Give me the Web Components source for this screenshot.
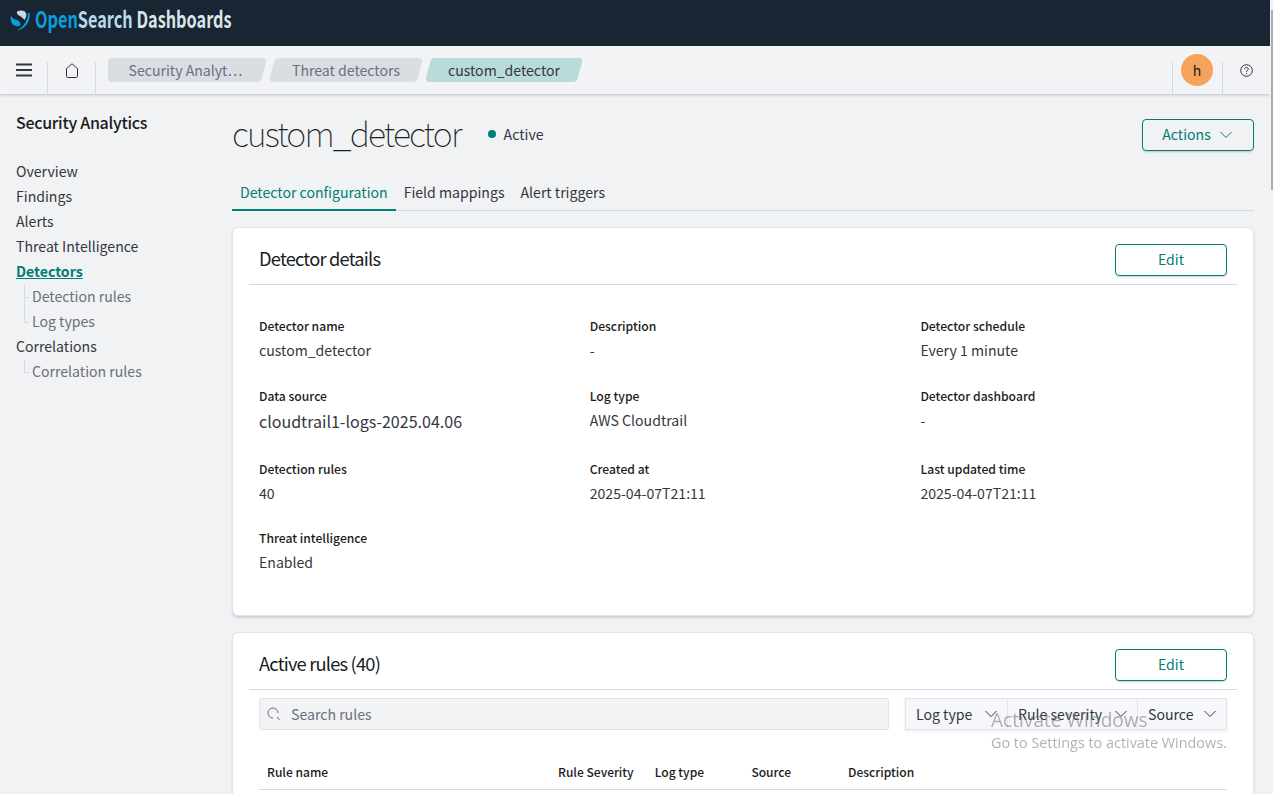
<!DOCTYPE html>
<html>
<head>
<meta charset="utf-8">
<title>Detector details</title>
<style>
    html, body { margin: 0; height: 794px; overflow: hidden; background: #f0f2f4; }
    body {
        font-family: "Noto Sans CJK SC", "Source Sans Pro", "Noto Sans", sans-serif;
        font-size: 14.1px;
        line-height: 21px;
        color: #1a1c21;
    }
    .shell { display: flex; flex-direction: column; height: 794px; }
    .body { display: flex; flex: 1; min-height: 0; }
    .main { flex: 1; min-width: 0; overflow: hidden; padding: 16px 19px 0 16px; }
</style>
</head>
<body>
<div class="shell">
    <os-header></os-header>
    <os-breadcrumbs></os-breadcrumbs>
    <div class="body">
        <os-sidenav></os-sidenav>
        <div class="main">
            <os-pagehead></os-pagehead>
            <os-panel heading="Detector details">
                <os-details></os-details>
            </os-panel>
            <os-panel heading="Active rules (40)" class="rules">
                <os-rules></os-rules>
            </os-panel>
        </div>
    </div>
</div>
<os-scrollbar></os-scrollbar>
<os-watermark></os-watermark>

<script>
const chevron = `<svg width="12" height="8" viewBox="0 0 12 8"><path d="M.5 1l5.500 5.500L11.500 1" fill="none" stroke="currentColor" stroke-width="1"/></svg>`;

class OsHeader extends HTMLElement {
    constructor () {
        super();
        this.attachShadow({mode: 'open'}).innerHTML = `
<style>
    :host { display: flex; align-items: center; height: 46px; background: #182533; padding-left: 10px; flex: none; }
    svg { flex: none; margin-top: -5px; }
    .name { font-size: 23px; line-height: 30px; font-weight: 700; margin-left: 4px; margin-top: -11px; transform: scaleX(.707); transform-origin: left center; white-space: nowrap; color: #dbe4e9; }
    .open { color: #0a9fdc; }
    .search { color: #b9d9ea; }
</style>
<svg width="21" height="22" viewBox="0 0 21 22">
    <path d="M19.500 3c1.500 8-4.500 16.500-13.500 18 5.500-2.500 11.500-8 12-18z" fill="#0a9fdc"/>
    <path d="M7 1.500c3-1.500 7-1.200 8.500.8 1.800 2.400.5 5.200-1 7.700-1.500-2.500-4-3.500-5.500-4.500C7.200 4.500 6.500 3 7 1.500z" fill="#c4dbe6"/>
    <path d="M1 5.500c1.500 3 3.700 3.900 6 4.600 2.500.8 3.500 2.500 3.500 5.200-2.800 1.500-6 1-8-1.200C.7 12 .3 8.500 1 5.500z" fill="#0a9fdc"/>
</svg>
<span class="name"><span class="open">Open</span><span class="search">Search</span> Dashboards</span>`;
    }
}
customElements.define('os-header', OsHeader);

class OsCrumb extends HTMLElement {
    constructor () {
        super();
        this.attachShadow({mode: 'open'}).innerHTML = `
<style>
    :host { display: block; position: relative; height: 24px; flex: none; }
    :host::before {
        content: ''; position: absolute; inset: 0; background: #dadde2;
        border-radius: 4px; transform: skewX(-15deg);
    }
    :host([first])::after {
        content: ''; position: absolute; left: -3px; top: 0; width: 12px; height: 24px;
        background: #dadde2; border-radius: 4px 0 0 4px;
    }
    :host([last])::before { background: #b9dcdb; }
    span { position: relative; z-index: 1; display: block; line-height: 24px; color: #69707d; text-align: center; white-space: nowrap; }
    :host([first]) span { padding-right: 4px; }
    :host([last]) span { color: #343741; }
</style>
<span><slot></slot></span>`;
    }
}
customElements.define('os-crumb', OsCrumb);

class OsBreadcrumbs extends HTMLElement {
    constructor () {
        super();
        this.attachShadow({mode: 'open'}).innerHTML = `
<style>
    :host { display: flex; height: 48px; width: 1270px; background: #f2f3f5; box-shadow: 0 1px 3px rgba(60,70,90,.28); position: relative; z-index: 2; flex: none; }
    .cell { display: flex; align-items: center; justify-content: center; color: #343741; }
    .menu { width: 47px; justify-content: flex-start; padding-left: 16px; box-sizing: border-box; }
    .sep { width: 1px; background: #d3dae6; margin-top: 16px; height: 32px; flex: none; }
    .home { width: 47px; }
    .crumbs { display: flex; flex: 1; align-items: center; gap: 8px; padding-left: 15px; height: 46px; margin-top: 1px; }
    .avatar { width: 32px; height: 32px; border-radius: 50%; background: #f5a35c; font-size: 14px; line-height: 32px; text-align: center; color: #1a1c21; margin: 8px 9px 0 8px; flex: none; }
    .help { width: 47px; }
    .help svg { margin-left: -1px; }
    .menu svg { margin-top: -1px; }
</style>
<div class="cell menu">
    <svg width="16" height="14" viewBox="0 0 16 14"><path d="M0 1.500h16M0 7h16M0 12.500h16" stroke="#343741" stroke-width="2" fill="none"/></svg>
</div>
<div class="sep"></div>
<div class="cell home">
    <svg width="14" height="15" viewBox="0 0 14 15"><path d="M1.500 13.500c0 .5.300 1 .8 1h9.400c.5 0 .8-.5.800-1V5.500L7 .8 1.500 5.500z" fill="none" stroke="#343741" stroke-width="1"/></svg>
</div>
<div class="sep"></div>
<div class="crumbs">
    <os-crumb first style="width:153px">Security Analyt…</os-crumb>
    <os-crumb style="width:148px">Threat detectors</os-crumb>
    <os-crumb last style="width:152px">custom_detector</os-crumb>
</div>
<div class="sep"></div>
<div class="avatar">h</div>
<div class="sep"></div>
<div class="cell help">
    <svg width="13" height="13" viewBox="0 0 13 13"><circle cx="6.500" cy="6.500" r="5.800" fill="none" stroke="#343741" stroke-width="1"/><path d="M4.700 5.100c0-1 .8-1.700 1.800-1.700s1.800.7 1.800 1.600c0 1.300-1.800 1.300-1.800 2.900" fill="none" stroke="#343741" stroke-width="1"/><circle cx="6.500" cy="9.600" r=".7" fill="#343741"/></svg>
</div>`;
    }
}
customElements.define('os-breadcrumbs', OsBreadcrumbs);

class OsSidenav extends HTMLElement {
    constructor () {
        super();
        this.attachShadow({mode: 'open'}).innerHTML = `
<style>
    :host { display: block; width: 216px; flex: none; padding: 16px 0 0 16px; box-sizing: border-box; }
    h2 { margin: 0 0 25px; font-size: 16px; line-height: 24px; font-weight: 500; letter-spacing: -.28px; color: #1a1c21; }
    a { display: block; height: 25px; line-height: 25px; font-size: 14.100px; color: #343741; white-space: nowrap; }
    a.on { color: #017d73; font-weight: 700; text-decoration: underline; }
    a.sub { position: relative; color: #69707d; padding-left: 16px; }
    a.sub::before { content: ''; position: absolute; left: 8px; top: 0; height: 13px; width: 4px; border-left: 1px solid #d3dae6; border-bottom: 1px solid #d3dae6; }
    a.sub.more::after { content: ''; position: absolute; left: 8px; top: 13px; height: 12px; border-left: 1px solid #d3dae6; }
</style>
<h2>Security Analytics</h2>
<a>Overview</a>
<a>Findings</a>
<a>Alerts</a>
<a>Threat Intelligence</a>
<a class="on">Detectors</a>
<a class="sub more">Detection rules</a>
<a class="sub">Log types</a>
<a>Correlations</a>
<a class="sub">Correlation rules</a>`;
    }
}
customElements.define('os-sidenav', OsSidenav);

class OsButton extends HTMLElement {
    constructor () {
        super();
        this.attachShadow({mode: 'open'}).innerHTML = `
<style>
    :host { display: inline-flex; align-items: center; justify-content: center; gap: 9px; box-sizing: border-box; height: 32px; border: 1px solid #017d73; border-radius: 4px; color: #017d73; font-size: 14.100px; box-shadow: 0 2px 2px -1px rgba(60,70,90,.25); background: transparent; flex: none; }
</style>
<slot></slot>`;
    }
}
customElements.define('os-button', OsButton);

class OsPagehead extends HTMLElement {
    constructor () {
        super();
        this.attachShadow({mode: 'open'}).innerHTML = `
<style>
    :host { display: block; }
    .top { display: flex; align-items: center; height: 48px; }
    h1 { margin: -2px 0 0; font-size: 34px; line-height: 48px; font-weight: 100; letter-spacing: -1.820px; color: #1a1c21; }
    .dot { width: 8px; height: 8px; border-radius: 50%; background: #017d73; margin-left: 27px; }
    .status { margin-left: 8px; color: #343741; }
    os-button { margin-left: auto; margin-top: 1px; width: 112px; padding-right: 2px; }
    .tabs { display: flex; height: 40px; margin-top: 12px; border-bottom: 1px solid #d3dae6; }
    .tabs a { display: block; padding: 0 8px; line-height: 44px; color: #343741; margin-bottom: -1px; white-space: nowrap; }
    .tabs a.on { color: #017d73; border-bottom: 2px solid #017d73; height: 39px; }
</style>
<div class="top">
    <h1>custom_detector</h1>
    <span class="dot"></span>
    <span class="status">Active</span>
    <os-button>Actions ${chevron}</os-button>
</div>
<div class="tabs">
    <a class="on">Detector configuration</a>
    <a>Field mappings</a>
    <a>Alert triggers</a>
</div>`;
    }
}
customElements.define('os-pagehead', OsPagehead);

class OsPanel extends HTMLElement {
    constructor () {
        super();
        this.attachShadow({mode: 'open'}).innerHTML = `
<style>
    :host { display: block; background: #fff; border: 1px solid #e1e5eb; border-radius: 6px; box-shadow: 0 2px 2px rgba(60,70,90,.18); margin-top: 16px; padding: 0 16px; }
    .head { display: flex; align-items: flex-start; justify-content: space-between; height: 57px; box-sizing: border-box; padding: 16px 10px 0; border-bottom: 1px solid #d3dae6; }
    h3 { margin: 2px 0 0; font-size: 18.300px; line-height: 24px; font-weight: 400; color: #1a1c21; letter-spacing: -.8px; }
    os-button { width: 112px; padding-bottom: 2px; }
</style>
<div class="head">
    <h3>${this.getAttribute('heading')}</h3>
    <os-button>Edit</os-button>
</div>
<slot></slot>`;
    }
}
customElements.define('os-panel', OsPanel);

class OsField extends HTMLElement {
    constructor () {
        super();
        this.attachShadow({mode: 'open'}).innerHTML = `
<style>
    :host { display: block; height: 70px; }
    .k { font-size: 12.150px; line-height: 21px; font-weight: 500; color: #1a1c21; }
    .v { line-height: 21px; margin-top: 4px; color: #343741; white-space: nowrap; }
    :host([big]) .v { font-size: 16.050px; line-height: 22px; }
</style>
<div class="k">${this.getAttribute('label')}</div>
<div class="v"><slot></slot></div>`;
    }
}
customElements.define('os-field', OsField);

class OsDetails extends HTMLElement {
    constructor () {
        super();
        this.attachShadow({mode: 'open'}).innerHTML = `
<style>
    :host { display: grid; grid-template-columns: repeat(3, 330.700px); grid-auto-rows: auto; padding: 30px 10px 18px; }
    os-field.tall { height: 73px; }
    os-field.short { height: 69px; }
</style>
<os-field label="Detector name">custom_detector</os-field>
<os-field label="Description">-</os-field>
<os-field label="Detector schedule">Every 1 minute</os-field>
<os-field class="tall" big label="Data source">cloudtrail1-logs-2025.04.06</os-field>
<os-field class="tall" label="Log type">AWS Cloudtrail</os-field>
<os-field class="tall" label="Detector dashboard">-</os-field>
<os-field class="short" label="Detection rules">40</os-field>
<os-field class="short" label="Created at">2025-04-07T21:11</os-field>
<os-field class="short" label="Last updated time">2025-04-07T21:11</os-field>
<os-field label="Threat intelligence">Enabled</os-field>`;
    }
}
customElements.define('os-details', OsDetails);

class OsRules extends HTMLElement {
    constructor () {
        super();
        this.attachShadow({mode: 'open'}).innerHTML = `
<style>
    :host { display: block; padding: 8px 10px 40px; }
    .bar { display: flex; justify-content: space-between; height: 32px; }
    .search { display: flex; align-items: center; width: 630px; box-sizing: border-box; background: #f2f3f5; border: 1px solid #e1e5eb; border-radius: 2px; color: #69707d; padding-left: 7px; gap: 10px; }
    .filters { display: flex; width: 322px; background: #f5f7fa; border: 1px solid #e1e5eb; box-sizing: border-box; box-shadow: 0 1px 2px rgba(60,70,90,.12); color: #343741; }
    .filters div { display: flex; align-items: center; justify-content: space-between; box-sizing: border-box; padding: 0 10px; }
    .filters div + div { border-left: 1px solid #e1e5eb; }
    table { border-collapse: collapse; table-layout: fixed; margin-top: 26px; width: 968px; }
    th { text-align: left; font-size: 12.050px; font-weight: 500; height: 33px; padding: 0 0 1px 8px; border-bottom: 1px solid #d3dae6; color: #1a1c21; white-space: nowrap; box-sizing: border-box; }
</style>
<div class="bar">
    <div class="search">
        <svg width="14" height="14" viewBox="0 0 14 14"><path d="M10 10l2.500 3M11 6A5 5 0 1 0 6 11" fill="none" stroke="#69707d" stroke-width="1"/></svg>
        Search rules
    </div>
    <div class="filters">
        <div style="width:101px">Log type ${chevron}</div>
        <div style="width:130px">Rule severity ${chevron}</div>
        <div style="width:89px">Source ${chevron}</div>
    </div>
</div>
<table>
    <colgroup><col style="width:291px"><col style="width:96.700px"><col style="width:96.700px"><col style="width:96.700px"><col></colgroup>
    <tr><th>Rule name</th><th>Rule Severity</th><th>Log type</th><th>Source</th><th>Description</th></tr>
</table>`;
    }
}
customElements.define('os-rules', OsRules);

class OsScrollbar extends HTMLElement {
    constructor () {
        super();
        this.attachShadow({mode: 'open'}).innerHTML = `
<style>
    :host { position: fixed; top: 0; right: 0; width: 3px; height: 794px; background: #f0f2f4; z-index: 3; }
    div { width: 2px; height: 180px; margin: 10px 0 0 1px; background: #a9acb0; }
</style>
<div></div>`;
    }
}
customElements.define('os-scrollbar', OsScrollbar);

class OsWatermark extends HTMLElement {
    constructor () {
        super();
        this.attachShadow({mode: 'open'}).innerHTML = `
<style>
    :host { position: fixed; left: 991px; top: 707px; z-index: 5; color: rgba(110,115,120,.55); font-family: "Open Sans", sans-serif; pointer-events: none; white-space: nowrap; }
    .a { font-size: 19.100px; line-height: 26px; }
    .b { font-size: 14.400px; line-height: 20px; }
</style>
<div class="a">Activate Windows</div>
<div class="b">Go to Settings to activate Windows.</div>`;
    }
}
customElements.define('os-watermark', OsWatermark);
</script>
</body>
</html>
